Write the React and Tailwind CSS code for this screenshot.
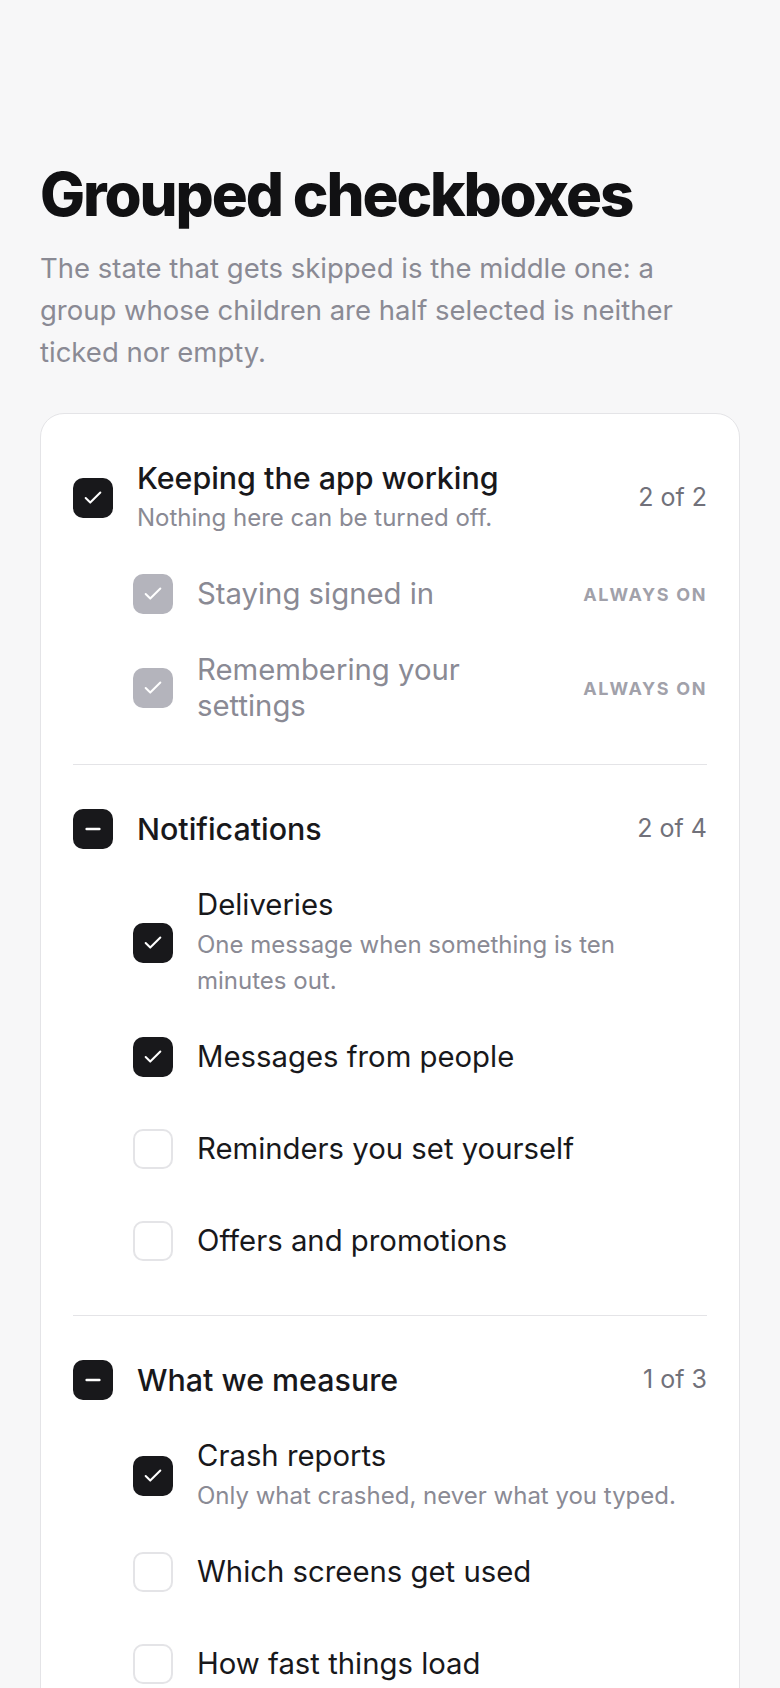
import React from "react";

const groups = [
  {
    title: "Keeping the app working",
    hint: "Nothing here can be turned off.",
    state: "checked",
    count: "2 of 2",
    items: [
      { label: "Staying signed in", state: "locked" },
      { label: "Remembering your settings", state: "locked" },
    ],
  },
  {
    title: "Notifications",
    state: "mixed",
    count: "2 of 4",
    items: [
      { label: "Deliveries", hint: "One message when something is ten minutes out.", state: "checked" },
      { label: "Messages from people", state: "checked" },
      { label: "Reminders you set yourself", state: "empty" },
      { label: "Offers and promotions", state: "empty" },
    ],
  },
  {
    title: "What we measure",
    state: "mixed",
    count: "1 of 3",
    items: [
      { label: "Crash reports", hint: "Only what crashed, never what you typed.", state: "checked" },
      { label: "Which screens get used", state: "empty" },
      { label: "How fast things load", state: "empty" },
    ],
  },
];

function Box({ state }) {
  if (state === "empty") {
    return <span className="w-10 h-10 shrink-0 rounded-[10px] border-2 border-[#e4e4e7] bg-white" />;
  }
  const bg = state === "locked" ? "bg-[#b4b4bc]" : "bg-[#18181b]";
  return (
    <span className={`w-10 h-10 shrink-0 rounded-[10px] ${bg} flex items-center justify-center text-white`}>
      <svg width="22" height="22" viewBox="0 0 24 24" fill="none" stroke="currentColor" strokeWidth="2.2" strokeLinecap="round" strokeLinejoin="round">
        {state === "mixed" ? <path d="M5 12h14" strokeWidth="2.6" /> : <path d="M20 6 9 17l-5-5" />}
      </svg>
    </span>
  );
}

export default function App() {
  return (
    <div className="min-h-screen bg-[#f7f7f8] px-10 pt-[161px] pb-10 font-['Inter',sans-serif]">
      <h1 className="text-[60px] font-extrabold leading-[1.1] tracking-[-0.035em] text-[#111113]">
        Grouped checkboxes
      </h1>
      <p className="mt-5 max-w-[680px] text-[27.5px] leading-[42px] text-[#8a8a94]">
        The state that gets skipped is the middle one: a group whose children are half selected is neither ticked nor empty.
      </p>

      <div className="mt-10 rounded-[24px] border border-[#e4e4e7] bg-white px-8 pt-4">
        <div className="divide-y divide-[#e4e4e7]">
          {groups.map((g) => (
            <div key={g.title} className="flex flex-col gap-6 pt-[30px] pb-10">
              <div className="flex min-h-[68px] items-center gap-6">
                <Box state={g.state} />
                <div className="flex-1">
                  <div className="text-[30.4px] font-medium leading-9 text-[#18181b]">{g.title}</div>
                  {g.hint && <div className="mt-1 text-[24px] leading-9 text-[#8a8a94]">{g.hint}</div>}
                </div>
                <span className="text-[25px] text-[#71717a]">{g.count}</span>
              </div>

              {g.items.map((it) => (
                <div key={it.label} className="flex min-h-[68px] items-center gap-6 pl-[60px]">
                  <Box state={it.state} />
                  <div className="flex-1">
                    <div className={`text-[29.3px] leading-[36px] ${it.state === "locked" ? "text-[#8a8a94]" : "text-[#18181b]"}`}>
                      {it.label}
                    </div>
                    {it.hint && <div className="mt-1 text-[24px] leading-9 text-[#8a8a94]">{it.hint}</div>}
                  </div>
                  {it.state === "locked" && (
                    <span className="text-[18px] font-bold tracking-[0.09em] text-[#a1a1aa]">ALWAYS ON</span>
                  )}
                </div>
              ))}
            </div>
          ))}
        </div>
      </div>
    </div>
  );
}
